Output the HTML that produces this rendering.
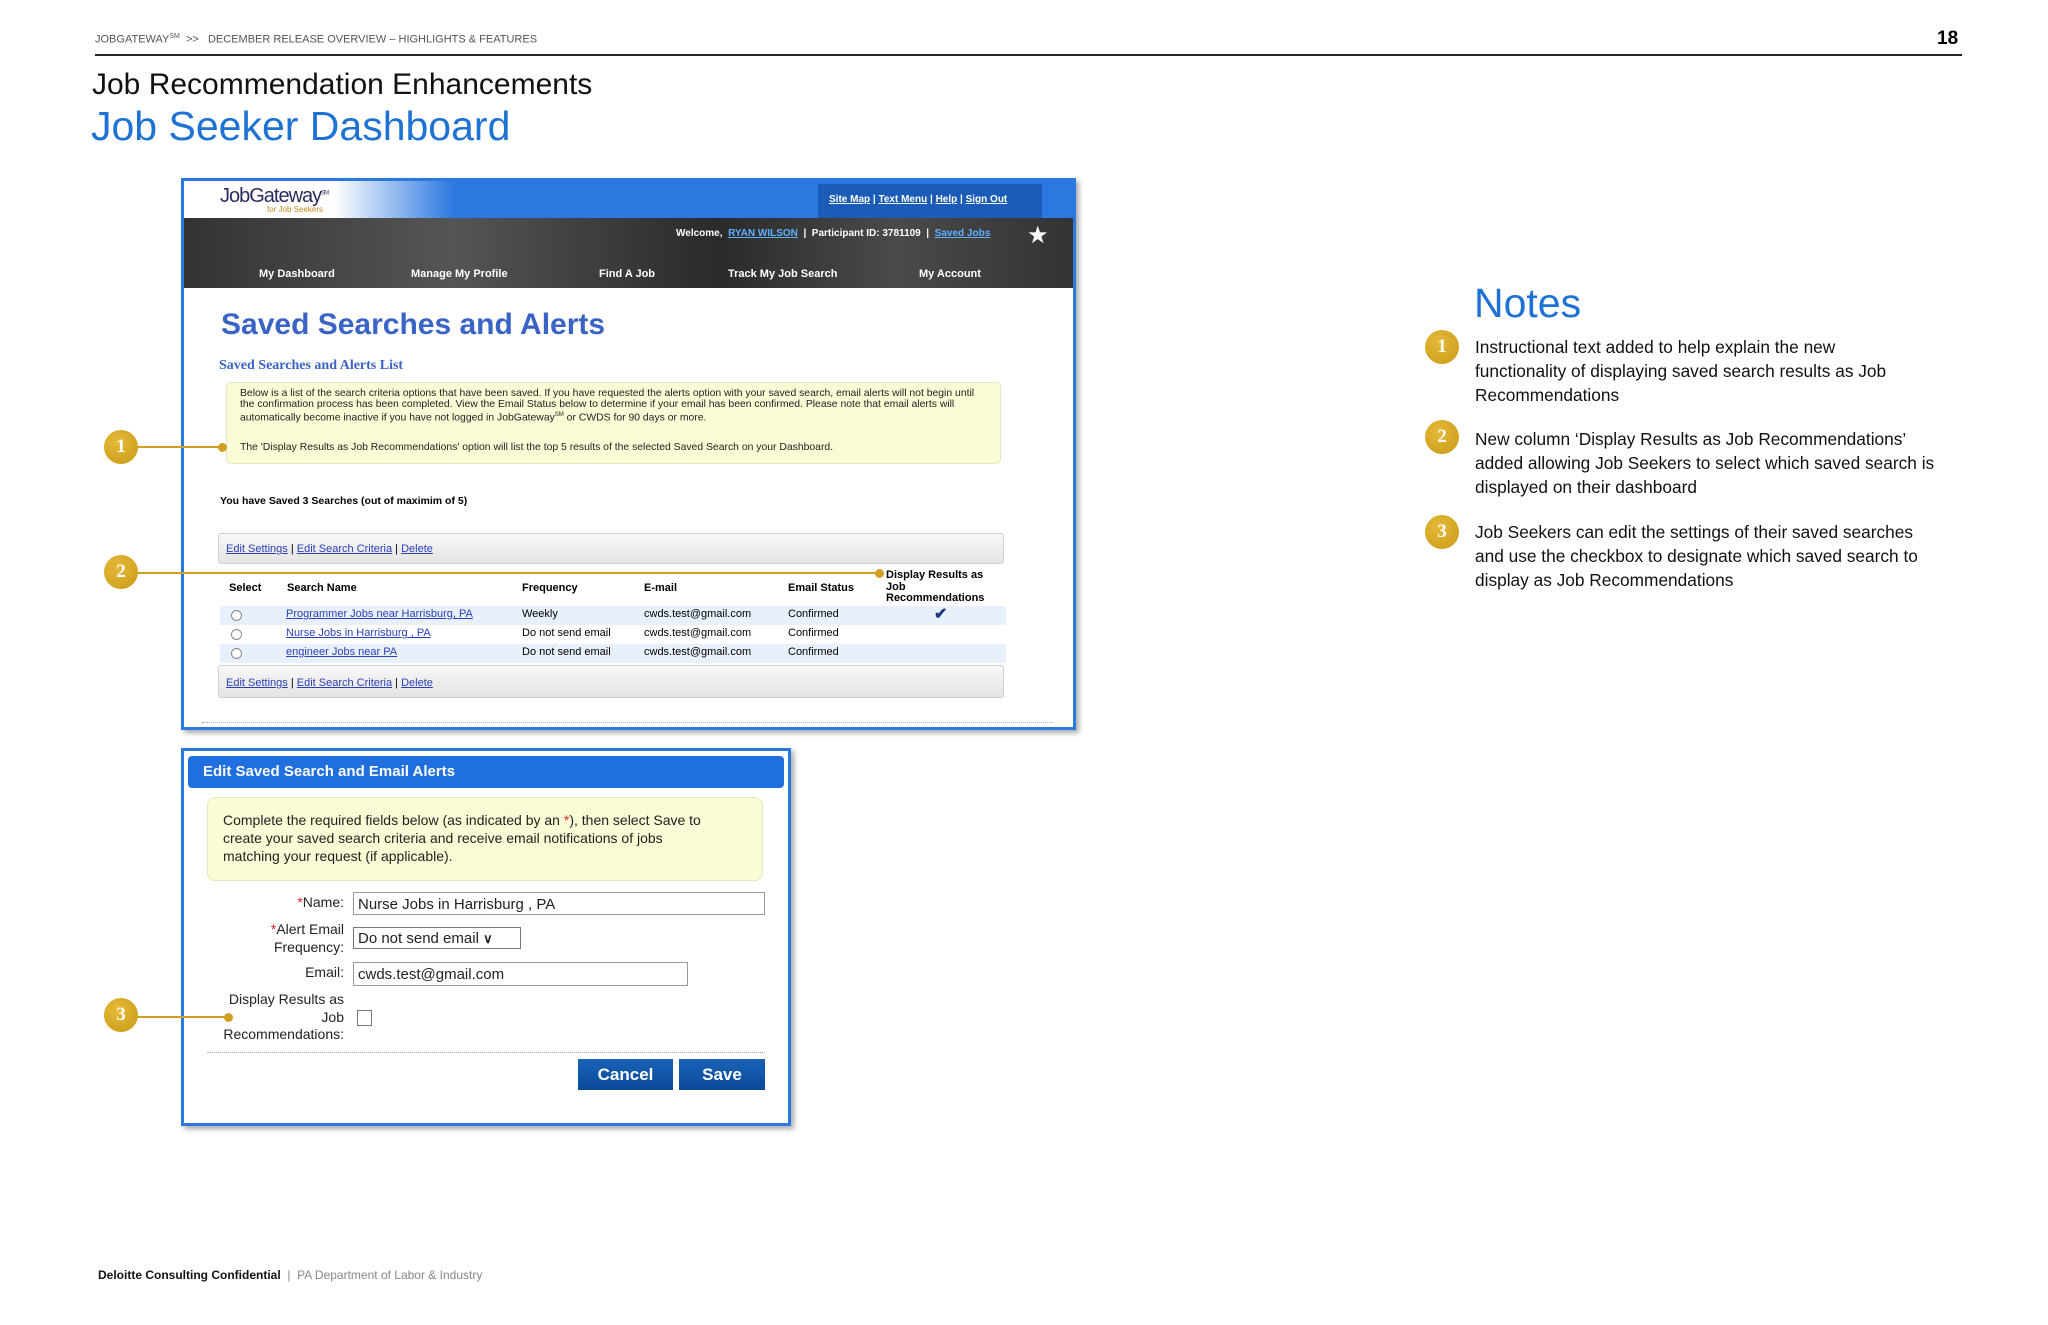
<!DOCTYPE html>
<html><head><meta charset="utf-8"><style>
*{margin:0;padding:0;box-sizing:border-box}
body{width:2048px;height:1325px;background:#fff;position:relative;overflow:hidden;font-family:"Liberation Sans",sans-serif;color:#000}
.a{position:absolute;white-space:nowrap}
.cl{position:absolute;width:34px;height:34px;border-radius:50%;background:radial-gradient(circle at 40% 35%,#e6b93a,#c99a16);color:#fff;font:bold 19px "Liberation Serif",serif;text-align:center;line-height:34px}
.ln{position:absolute;height:2px;background:#d2a020}
.dot{position:absolute;width:9px;height:9px;border-radius:50%;background:#d2a020}
.lk{color:#2a3fb8;text-decoration:underline}
.tb{position:absolute;left:218px;width:786px;background:linear-gradient(#f8f8f8,#e4e4e4);border:1px solid #d0d0d0;border-radius:3px;font-size:11px}
.t11{font-size:11px}
.row{position:absolute;left:220px;width:786px;height:19px}
.rad{position:absolute;width:11px;height:11px;border:1px solid #888;border-radius:50%;background:#fff}
.n{position:absolute;left:1475px;font-size:17.3px;line-height:24px;color:#111}
</style></head><body>

<div class="a" style="left:95px;top:33px;font-size:11px;color:#555">JOBGATEWAY<sup style="font-size:7px">SM</sup>&nbsp; &gt;&gt;&nbsp;&nbsp; DECEMBER RELEASE OVERVIEW – HIGHLIGHTS &amp; FEATURES</div>
<div class="a" style="left:1937px;top:28px;font-size:19px;font-weight:bold">18</div>
<div class="a" style="left:95px;top:54px;width:1867px;height:2px;background:#222"></div>
<div class="a" style="left:92px;top:68px;font-size:30px;color:#111">Job Recommendation Enhancements</div>
<div class="a" style="left:91px;top:103px;font-size:41px;color:#1e72d4">Job Seeker Dashboard</div>

<!-- screenshot 1 -->
<div class="a" style="left:181px;top:178px;width:895px;height:552px;border:3px solid #2a78e0;box-shadow:3px 3px 5px #aaa;background:#fff;overflow:hidden">
 <div class="a" style="left:0;top:0;width:889px;height:37px;background:linear-gradient(90deg,#fff 0,#fff 150px,#2b78e0 270px,#2b78e0)"></div>
 <div class="a" style="left:36px;top:4px;font-size:20px;color:#2a2a60;letter-spacing:-1px">JobGateway<sup style="font-size:6px">SM</sup></div>
 <div class="a" style="left:83px;top:24px;font-size:8px;color:#c08a20">for Job Seekers</div>
 <div class="a" style="left:634px;top:3px;width:224px;height:34px;background:#1a5cb8"></div>
 <div class="a" style="left:645px;top:13px;font-size:10px;font-weight:bold;color:#fff"><u>Site Map</u> | <u>Text Menu</u> | <u>Help</u> | <u>Sign Out</u></div>
 <div class="a" style="left:0;top:37px;width:889px;height:70px;background:linear-gradient(90deg,#333,#555 30%,#2a2a2a 60%,#4a4a4a 80%,#333)"></div>
 <div class="a" style="left:492px;top:47px;font-size:10px;font-weight:bold;color:#fff">Welcome, &nbsp;<span style="color:#5fb0ff;text-decoration:underline">RYAN WILSON</span> &nbsp;| &nbsp;Participant ID: 3781109 &nbsp;| &nbsp;<span style="color:#5fb0ff;text-decoration:underline">Saved Jobs</span></div>
 <div class="a" style="left:843px;top:40px;font-size:24px;color:#fff">★</div>
 <div class="a" style="left:75px;top:87px;font-size:11px;font-weight:bold;color:#fff">My Dashboard</div>
 <div class="a" style="left:227px;top:87px;font-size:11px;font-weight:bold;color:#fff">Manage My Profile</div>
 <div class="a" style="left:415px;top:87px;font-size:11px;font-weight:bold;color:#fff">Find A Job</div>
 <div class="a" style="left:544px;top:87px;font-size:11px;font-weight:bold;color:#fff">Track My Job Search</div>
 <div class="a" style="left:735px;top:87px;font-size:11px;font-weight:bold;color:#fff">My Account</div>
 <div class="a" style="left:37px;top:127px;font-size:30px;font-weight:bold;color:#3a63c6">Saved Searches and Alerts</div>
 <div class="a" style="left:35px;top:177px;font-size:14px;font-weight:bold;color:#3a63c6;font-family:'Liberation Serif',serif">Saved Searches and Alerts List</div>
 <div class="a" style="left:42px;top:201px;width:775px;height:82px;background:#fbfbd6;border:1px solid #e6e6c0;border-radius:5px"></div>
 <div class="a" style="left:56px;top:207px;font-size:10.4px;line-height:11px;color:#222">Below is a list of the search criteria options that have been saved. If you have requested the alerts option with your saved search, email alerts will not begin until<br>the confirmation process has been completed. View the Email Status below to determine if your email has been confirmed. Please note that email alerts will<br>automatically become inactive if you have not logged in JobGateway<sup style="font-size:6px">SM</sup> or CWDS for 90 days or more.</div>
 <div class="a" style="left:56px;top:261px;font-size:10.4px;color:#222">The 'Display Results as Job Recommendations' option will list the top 5 results of the selected Saved Search on your Dashboard.</div>
 <div class="a" style="left:36px;top:314px;font-size:10.5px;font-weight:bold">You have Saved 3 Searches (out of maximim of 5)</div>
 <div class="a" style="left:18px;top:541px;width:850px;border-top:1px dotted #9ab"></div>
</div>
<div class="tb" style="top:533px;height:31px"><span class="a" style="left:7px;top:9px"><span class="lk">Edit Settings</span> | <span class="lk">Edit Search Criteria</span> | <span class="lk">Delete</span></span></div>
<div class="a t11" style="left:229px;top:582px;font-weight:bold">Select</div>
<div class="a t11" style="left:287px;top:582px;font-weight:bold">Search Name</div>
<div class="a t11" style="left:522px;top:582px;font-weight:bold">Frequency</div>
<div class="a t11" style="left:644px;top:582px;font-weight:bold">E-mail</div>
<div class="a t11" style="left:788px;top:582px;font-weight:bold">Email Status</div>
<div class="a t11" style="left:886px;top:570px;font-weight:bold;line-height:11.5px">Display Results as<br>Job<br>Recommendations</div>
<div class="row" style="top:606px;background:#e8f0fb"></div>
<div class="row" style="top:644px;background:#e8f0fb"></div>
<div class="rad" style="left:231px;top:610px"></div><div class="rad" style="left:231px;top:629px"></div><div class="rad" style="left:231px;top:648px"></div>
<div class="a t11" style="left:286px;top:608px"><span class="lk">Programmer Jobs near Harrisburg, PA</span></div>
<div class="a t11" style="left:286px;top:627px"><span class="lk">Nurse Jobs in Harrisburg , PA</span></div>
<div class="a t11" style="left:286px;top:646px"><span class="lk">engineer Jobs near PA</span></div>
<div class="a t11" style="left:522px;top:608px">Weekly</div>
<div class="a t11" style="left:522px;top:627px">Do not send email</div>
<div class="a t11" style="left:522px;top:646px">Do not send email</div>
<div class="a t11" style="left:644px;top:608px">cwds.test@gmail.com</div>
<div class="a t11" style="left:644px;top:627px">cwds.test@gmail.com</div>
<div class="a t11" style="left:644px;top:646px">cwds.test@gmail.com</div>
<div class="a t11" style="left:788px;top:608px">Confirmed</div>
<div class="a t11" style="left:788px;top:627px">Confirmed</div>
<div class="a t11" style="left:788px;top:646px">Confirmed</div>
<div class="a" style="left:934px;top:604px;font-size:16px;color:#1a3a80;font-weight:bold">✔</div>
<div class="tb" style="top:665px;height:33px"><span class="a" style="left:7px;top:11px"><span class="lk">Edit Settings</span> | <span class="lk">Edit Search Criteria</span> | <span class="lk">Delete</span></span></div>

<!-- screenshot 2 -->
<div class="a" style="left:181px;top:748px;width:610px;height:378px;border:3px solid #2a78e0;box-shadow:3px 3px 5px #aaa;background:#fff"></div>
<div class="a" style="left:188px;top:756px;width:596px;height:32px;background:#1f6fde;border-radius:4px"></div>
<div class="a" style="left:203px;top:763px;font-size:15px;font-weight:bold;color:#fff">Edit Saved Search and Email Alerts</div>
<div class="a" style="left:207px;top:797px;width:556px;height:84px;background:#fbfbd6;border:1px solid #e6e6c0;border-radius:8px"></div>
<div class="a" style="left:223px;top:811px;font-size:14px;line-height:18px;color:#222">Complete the required fields below (as indicated by an <span style="color:#e02020">*</span>), then select Save to<br>create your saved search criteria and receive email notifications of jobs<br>matching your request (if applicable).</div>
<div class="a" style="left:200px;top:894px;width:144px;text-align:right;font-size:14px;color:#222"><span style="color:#e02020">*</span>Name:</div>
<div class="a" style="left:353px;top:892px;width:412px;height:23px;border:1px solid #999;font-size:15px;padding:3px 4px;color:#222">Nurse Jobs in Harrisburg , PA</div>
<div class="a" style="left:200px;top:920px;width:144px;text-align:right;font-size:14px;line-height:18px;color:#222"><span style="color:#e02020">*</span>Alert Email<br>Frequency:</div>
<div class="a" style="left:353px;top:927px;width:168px;height:22px;border:1px solid #777;font-size:15px;padding:2px 4px;color:#222">Do not send email <span style="font-size:13px;font-weight:bold">&#8744;</span></div>
<div class="a" style="left:200px;top:964px;width:144px;text-align:right;font-size:14px;color:#222">Email:</div>
<div class="a" style="left:353px;top:962px;width:335px;height:24px;border:1px solid #999;font-size:15px;padding:3px 4px;color:#222">cwds.test@gmail.com</div>
<div class="a" style="left:200px;top:991px;width:144px;text-align:right;font-size:14px;line-height:17.5px;color:#222">Display Results as<br>Job<br>Recommendations:</div>
<div class="a" style="left:357px;top:1010px;width:15px;height:16px;border:1px solid #777"></div>
<div class="a" style="left:207px;top:1052px;width:558px;border-top:1px dotted #9ab"></div>
<div class="a" style="left:578px;top:1059px;width:95px;height:31px;background:linear-gradient(#1a62b8,#0a4a98);color:#fff;font-size:17px;font-weight:bold;text-align:center;line-height:31px">Cancel</div>
<div class="a" style="left:679px;top:1059px;width:86px;height:31px;background:linear-gradient(#1a62b8,#0a4a98);color:#fff;font-size:17px;font-weight:bold;text-align:center;line-height:31px">Save</div>

<!-- callouts -->
<div class="ln" style="left:121px;top:446px;width:101px"></div><div class="dot" style="left:218px;top:443px"></div>
<div class="ln" style="left:121px;top:572px;width:758px"></div><div class="dot" style="left:875px;top:569px"></div>
<div class="ln" style="left:121px;top:1016px;width:107px"></div><div class="dot" style="left:224px;top:1013px"></div>
<div class="cl" style="left:104px;top:430px">1</div>
<div class="cl" style="left:104px;top:555px">2</div>
<div class="cl" style="left:104px;top:998px">3</div>

<!-- notes -->
<div class="a" style="left:1474px;top:280px;font-size:41px;color:#1e72d4">Notes</div>
<div class="cl" style="left:1425px;top:330px">1</div>
<div class="cl" style="left:1425px;top:420px">2</div>
<div class="cl" style="left:1425px;top:515px">3</div>
<div class="n" style="top:335px">Instructional text added to help explain the new<br>functionality of displaying saved search results as Job<br>Recommendations</div>
<div class="n" style="top:427px">New column ‘Display Results as Job Recommendations’<br>added allowing Job Seekers to select which saved search is<br>displayed on their dashboard</div>
<div class="n" style="top:520px">Job Seekers can edit the settings of their saved searches<br>and use the checkbox to designate which saved search to<br>display as Job Recommendations</div>

<div class="a" style="left:98px;top:1268px;font-size:12px;color:#111"><b>Deloitte Consulting Confidential</b> <span style="color:#888">&nbsp;|&nbsp; PA Department of Labor &amp; Industry</span></div>
</body></html>
